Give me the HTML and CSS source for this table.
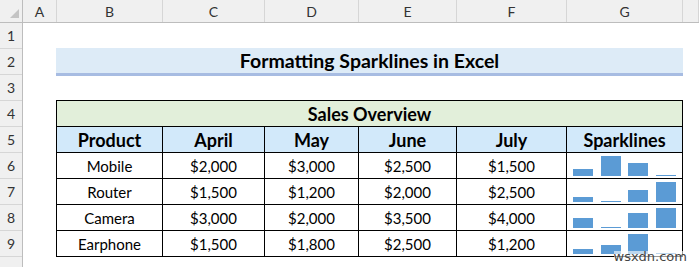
FILE: index.html
```html
<!DOCTYPE html>
<html>
<head>
<meta charset="utf-8">
<link rel="stylesheet" href="styles.css">
</head>
<body>
<div class="sheet">
  <div class="corner"><span class="tri"></span></div>
  <div class="colheads">
    <div class="ch w-a">A</div>
    <div class="ch w-b">B</div>
    <div class="ch w-c">C</div>
    <div class="ch w-d">D</div>
    <div class="ch w-e">E</div>
    <div class="ch w-f">F</div>
    <div class="ch w-g">G</div>
    <div class="ch w-h"></div>
  </div>
  <div class="rowheads">
    <div class="rh">1</div>
    <div class="rh">2</div>
    <div class="rh">3</div>
    <div class="rh">4</div>
    <div class="rh">5</div>
    <div class="rh">6</div>
    <div class="rh">7</div>
    <div class="rh">8</div>
    <div class="rh">9</div>
    <div class="rh"></div>
  </div>
  <div class="body">
    <div class="title">Formatting Sparklines in Excel</div>
    <div class="table">
      <div class="cell group">Sales Overview</div>
      <div class="cell head">Product</div>
      <div class="cell head">April</div>
      <div class="cell head">May</div>
      <div class="cell head">June</div>
      <div class="cell head">July</div>
      <div class="cell head">Sparklines</div>

      <div class="cell">Mobile</div>
      <div class="cell">$2,000</div>
      <div class="cell">$3,000</div>
      <div class="cell">$2,500</div>
      <div class="cell">$1,500</div>
      <div class="cell spark"><span class="bar" style="height:7px"></span><span class="bar" style="height:20px"></span><span class="bar" style="height:13px"></span><span class="bar" style="height:1px"></span></div>

      <div class="cell">Router</div>
      <div class="cell">$1,500</div>
      <div class="cell">$1,200</div>
      <div class="cell">$2,000</div>
      <div class="cell">$2,500</div>
      <div class="cell spark"><span class="bar" style="height:5px"></span><span class="bar" style="height:1px"></span><span class="bar" style="height:12px"></span><span class="bar" style="height:20px"></span></div>

      <div class="cell">Camera</div>
      <div class="cell">$3,000</div>
      <div class="cell">$2,000</div>
      <div class="cell">$3,500</div>
      <div class="cell">$4,000</div>
      <div class="cell spark"><span class="bar" style="height:10px"></span><span class="bar" style="height:1px"></span><span class="bar" style="height:15px"></span><span class="bar" style="height:20px"></span></div>

      <div class="cell">Earphone</div>
      <div class="cell">$1,500</div>
      <div class="cell">$1,800</div>
      <div class="cell">$2,500</div>
      <div class="cell">$1,200</div>
      <div class="cell spark"><span class="bar" style="height:5px"></span><span class="bar" style="height:9px"></span><span class="bar" style="height:20px"></span><span class="bar" style="height:1px"></span></div>
    </div>
  </div>
  <span class="wm">wsxdn.com</span>
</div>
</body>
</html>
```

FILE: styles.css
```css
html, body {
  margin: 0;
  padding: 0;
  background: #ffffff;
}

.sheet {
  position: relative;
  width: 699px;
  height: 267px;
  overflow: hidden;
  display: grid;
  grid-template-columns: 23px 1fr;
  grid-template-rows: 23px 1fr;
  font-family: Lato, "Open Sans", sans-serif;
  color: #000;
}

.corner {
  position: relative;
  background: #f0f0f0;
  border-right: 1px solid #bdbdbd;
  border-bottom: 1px solid #bdbdbd;
  box-sizing: border-box;
}

.tri {
  position: absolute;
  left: 10px;
  top: 9px;
  width: 0;
  height: 0;
  border-left: 9px solid transparent;
  border-bottom: 9px solid #c4c4c4;
}

.colheads {
  display: flex;
  background: #f0f0f0;
  border-bottom: 1px solid #bdbdbd;
  box-sizing: border-box;
}

.ch {
  box-sizing: border-box;
  border-right: 1px solid #d6d6d6;
  display: flex;
  align-items: center;
  justify-content: center;
  font-size: 14px;
  color: #333;
  flex: none;
}

.w-a { width: 34px; }
.w-b { width: 106px; }
.w-c { width: 102px; }
.w-d { width: 94px; }
.w-e { width: 98px; }
.w-f { width: 110px; }
.w-g { width: 116px; }
.w-h { flex: 1; }

.rowheads {
  background: #f0f0f0;
  border-right: 1px solid #bdbdbd;
  box-sizing: border-box;
  display: flex;
  flex-direction: column;
}

.rh {
  height: 26px;
  flex: none;
  box-sizing: border-box;
  border-bottom: 1px solid #d6d6d6;
  display: flex;
  align-items: center;
  justify-content: center;
  font-size: 14px;
  color: #333;
}

.body {
  padding-top: 25px;
}

.title {
  margin-left: 33px;
  width: 627px;
  height: 28px;
  box-sizing: border-box;
  background: #ddebf7;
  border-bottom: 3px solid #a7bce2;
  display: flex;
  align-items: center;
  justify-content: center;
  font-weight: 700;
  font-size: 19.5px;
}

.table {
  margin-top: 24px;
  margin-left: 33px;
  width: max-content;
  display: grid;
  grid-template-columns: 105px 101px 93px 97px 109px 115px;
  grid-auto-rows: 25px;
  gap: 1px;
  padding: 1px;
  background: #000;
}

.cell {
  background: #fff;
  display: flex;
  align-items: center;
  justify-content: center;
  font-size: 15px;
}

.group {
  grid-column: 1 / -1;
  background: #e2efda;
  font-weight: 700;
  font-size: 18px;
}

.head {
  background: #d2e9fa;
  font-weight: 700;
  font-size: 18px;
}

.spark {
  align-items: flex-end;
  justify-content: space-between;
  padding: 0 6px 2px;
}

.bar {
  width: 20px;
  background: #5b9bd5;
}

.wm {
  position: absolute;
  right: 12px;
  bottom: 4px;
  font-family: "DejaVu Sans", sans-serif;
  font-size: 13px;
  color: #444;
  background: rgba(255,255,255,0.6);
  line-height: 12px;
}
```
